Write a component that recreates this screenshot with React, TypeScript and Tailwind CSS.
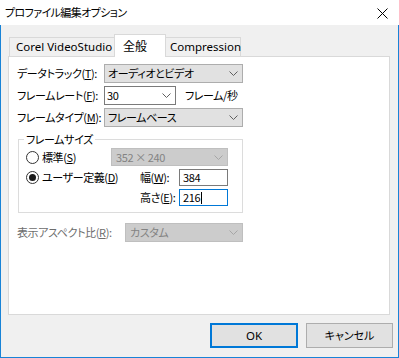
import React from "react"

const Chevron = ({ color = "#606060" }: { color?: string }) => (
  <svg width="9" height="5" viewBox="0 0 9 5" className="shrink-0">
    <polyline points="0.5,0.5 4.5,4.5 8.5,0.5" fill="none" stroke={color} strokeWidth="1" />
  </svg>
)

const Radio = ({ checked }: { checked?: boolean }) => (
  <span className="w-[13px] h-[13px] rounded-full border border-[#333333] bg-white flex items-center justify-center shrink-0">
    {checked && <span className="w-[7px] h-[7px] rounded-full bg-[#1a1a1a]" />}
  </span>
)

const Key = ({ k }: { k: string }) => (
  <>
    (<span className="underline underline-offset-[1px]">{k}</span>)
  </>
)

export default function App() {
  return (
    <div className="w-[399px] h-[358px] flex flex-col font-['Noto_Sans_CJK_JP',sans-serif] [font-feature-settings:'palt'] text-[11px] leading-none text-black whitespace-nowrap select-none">
      {/* title bar */}
      <div className="h-[25px] bg-white flex items-center pl-[5px] pr-[11px] shrink-0 tracking-[-0.6px]">
        <span className="flex-1">プロファイル編集オプション</span>
        <svg width="11" height="11" viewBox="0 0 11 11" className="mt-[2px]">
          <path d="M0.5 0.5 L10.5 10.5 M10.5 0.5 L0.5 10.5" stroke="#000" strokeWidth="1" />
        </svg>
      </div>

      {/* body */}
      <div className="flex-1 bg-[#f0f0f0] border-l border-r border-b border-[#1883d7] flex flex-col pt-[9px]">
        {/* tabs */}
        <div className="flex items-end ml-[8px] h-[22px]">
          <div className="h-[19px] w-[105px] border-t border-l border-[#d9d9d9] bg-[#f0f0f0] flex items-center pl-[6px] font-['Noto_Sans',sans-serif] text-[11.5px]">
            Corel VideoStudio
          </div>
          <div className="relative z-10 h-[23px] w-[52px] -mb-[1px] border-t border-l border-r border-[#d9d9d9] bg-white flex items-center pl-[8px] pb-[1px] text-[12px]">
            全般
          </div>
          <div className="h-[19px] w-[75px] border-t border-r border-[#d9d9d9] bg-[#f0f0f0] flex items-center pl-[4px] font-['Noto_Sans',sans-serif] text-[11.5px]">
            Compression
          </div>
        </div>

        {/* panel */}
        <div className="ml-[7px] w-[382px] h-[259px] bg-white border border-[#d9d9d9] flex flex-col pt-[7px] pl-[8px] tracking-[-0.4px]">
          <div className="flex items-center h-[19px]">
            <span className="w-[87px]">データトラック<Key k="T" />:</span>
            <div className="w-[139px] h-[19px] bg-[#e1e1e1] border border-[#adadad] flex items-center pl-[3px] pr-[4px]">
              <span className="flex-1">オーディオとビデオ</span>
              <Chevron />
            </div>
          </div>
          <div className="flex items-center h-[19px] mt-[3px]">
            <span className="w-[87px]">フレームレート<Key k="F" />:</span>
            <div className="w-[72px] h-[19px] bg-white border border-[#7a7a7a] flex items-center pl-[2px] pr-[4px]">
              <span className="flex-1">30</span>
              <Chevron />
            </div>
            <span className="ml-[9px]">フレーム/秒</span>
          </div>
          <div className="flex items-center h-[19px] mt-[3px]">
            <span className="w-[87px]">フレームタイプ<Key k="M" />:</span>
            <div className="w-[139px] h-[19px] bg-[#e1e1e1] border border-[#adadad] flex items-center pl-[3px] pr-[4px]">
              <span className="flex-1">フレームベース</span>
              <Chevron />
            </div>
          </div>

          {/* frame size group */}
          <fieldset className="mt-[5px] ml-[1px] w-[225px] border border-[#dcdcdc] pt-[2px] pb-[6px]">
            <legend className="ml-[5px] px-[2px] h-[14px] flex items-center">フレームサイズ</legend>
            <div className="flex items-center h-[18px] pl-[7px]">
              <div className="w-[85px] flex items-center">
                <Radio />
                <span className="ml-[3px]">標準<Key k="S" /></span>
              </div>
              <div className="w-[117px] h-[18px] bg-[#cccccc] border border-[#bfbfbf] flex items-center pl-[4px] pr-[4px] text-[#838383]">
                <span className="flex-1">352 × 240</span>
                <Chevron color="#a6a6a6" />
              </div>
            </div>
            <div className="flex items-center h-[17px] mt-[3px] pl-[7px]">
              <div className="w-[114px] flex items-center">
                <Radio checked />
                <span className="ml-[3px]">ユーザー定義<Key k="D" /></span>
              </div>
              <span className="w-[39px]">幅<Key k="W" />:</span>
              <div className="w-[49px] h-[17px] bg-white border border-[#7a7a7a] flex items-center pl-[3px]">384</div>
            </div>
            <div className="flex items-center h-[17px] mt-[3px] pl-[7px]">
              <div className="w-[114px]" />
              <span className="w-[39px]">高さ<Key k="E" />:</span>
              <div className="w-[49px] h-[17px] bg-white border border-[#0078d7] flex items-center pl-[3px]">
                216<span className="inline-block w-px h-[12px] bg-black ml-[1px]" />
              </div>
            </div>
          </fieldset>

          <div className="flex items-center h-[19px] mt-[10px]">
            <span className="w-[108px] text-[#6d6d6d]">表示アスペクト比<Key k="R" />:</span>
            <div className="w-[118px] h-[19px] bg-[#cccccc] border border-[#bfbfbf] flex items-center pl-[4px] pr-[4px] text-[#838383]">
              <span className="flex-1">カスタム</span>
              <Chevron color="#a6a6a6" />
            </div>
          </div>
        </div>

        {/* buttons */}
        <div className="flex justify-end gap-[8px] mt-[8px] pr-[5px]">
          <button className="w-[88px] h-[25px] bg-[#e1e1e1] border-2 border-[#0078d7] flex items-center justify-center font-['Noto_Sans',sans-serif] text-[11.5px]">
            OK
          </button>
          <button className="w-[87px] h-[25px] bg-[#e1e1e1] border border-[#adadad] flex items-center justify-center">
            キャンセル
          </button>
        </div>
      </div>
    </div>
  )
}
